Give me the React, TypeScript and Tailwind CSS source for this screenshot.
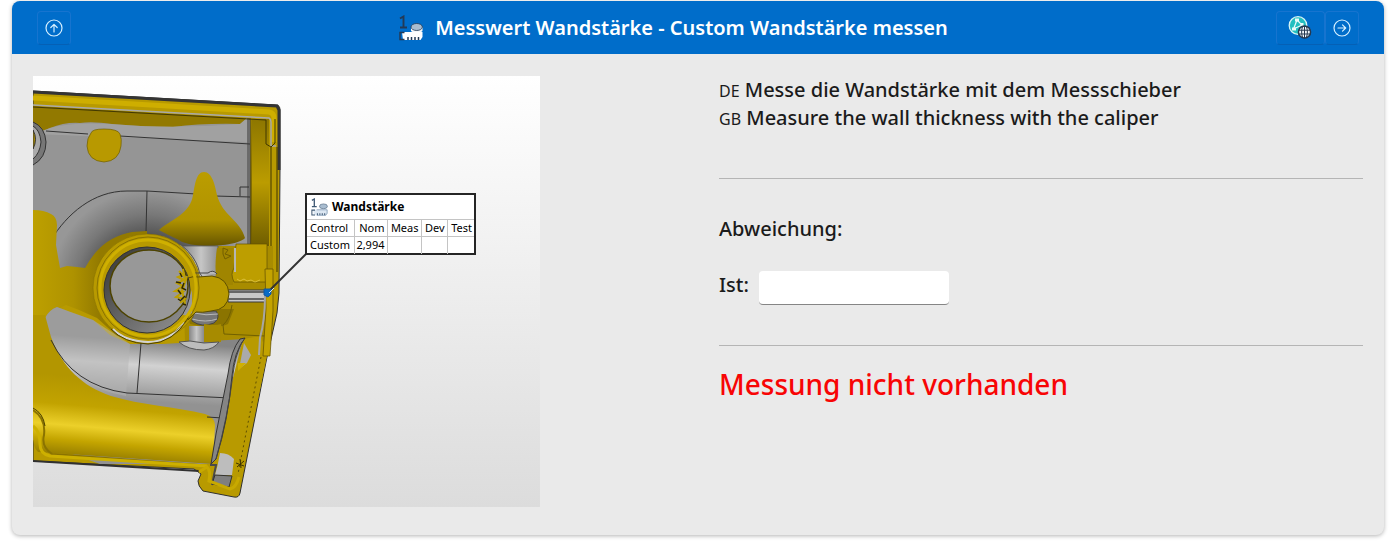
import { ReactNode, useState } from "react";

interface HeaderButtonProps {
  label: string;
  wide?: boolean;
  children: ReactNode;
}

const measurement = {
  title: "Messwert Wandstärke - Custom Wandstärke messen",
  columns: ["Control", "Nom", "Meas", "Dev", "Test"],
  values: ["Custom", "2,994", "", "", ""],
};

const instructions = [
  { lang: "DE", text: "Messe die Wandstärke mit dem Messschieber" },
  { lang: "GB", text: "Measure the wall thickness with the caliper" },
];

function HeaderButton({ label, wide, children }: HeaderButtonProps) {
  return (
    <button
      aria-label={label}
      className={`flex h-[34px] items-center justify-center rounded border border-[#1774cf] border-b-[#0560b5] ${
        wide ? "w-[49px]" : "w-[34px]"
      }`}
    >
      {children}
    </button>
  );
}

function ArrowCircle({ right }: { right?: boolean }) {
  return (
    <svg
      viewBox="0 0 20 20"
      className={right ? "size-5 rotate-90" : "size-5"}
      fill="none"
      stroke="#d6f0ff"
      strokeWidth="1.2"
      strokeLinecap="round"
      strokeLinejoin="round"
    >
      <circle cx="10" cy="10" r="8" />
      <path d="M10 14V6.5M6.8 9.5 10 6.3l3.2 3.2" />
    </svg>
  );
}

function GlobeIcon() {
  return (
    <svg viewBox="0 0 24 24" className="size-6" fill="none">
      <circle cx="10" cy="9.5" r="8.800" fill="#22bfc0" stroke="#d8f5f4" strokeWidth="1.3" />
      <path d="M9 4 5.500 13M9 4l5 5M5.500 13 14 9" stroke="#e9fbfa" strokeWidth="1.2" />
      <path d="M7 2.500h4v3H7zM4 11.500h4v3H4zM12.500 7h3v3h-3z" fill="#e9fbfa" />
      <circle cx="16.500" cy="16" r="6.800" fill="#26384f" />
      <circle cx="16.500" cy="16" r="5.300" fill="#f3f7fb" />
      <path
        d="M10.500 14.200h12M10.500 18h12M16.500 10v12.200M14.600 10.500c-1.300 3.500-1.300 7.500 0 11M18.400 10.500c1.300 3.500 1.300 7.500 0 11"
        stroke="#26384f"
        strokeWidth="1"
      />
    </svg>
  );
}

function CaliperIcon({ light, className }: { light?: boolean; className: string }) {
  const ink = light ? "#3f5873" : "#233a56";
  return (
    <svg viewBox="0 0 24 26" className={className} fill="none">
      <path d="M1 3.500 4.500 1.500v11M1 12.500h7" stroke={ink} strokeWidth="1.900" />
      <path d="M12 12v3.500c0 3 11.500 3 11.500 0V12" fill="#f5f8fb" />
      <ellipse cx="17.700" cy="12" rx="5.700" ry="3.500" fill="#a9bdd0" stroke={ink} strokeWidth=".8" />
      <path d="M3 17h20.500v5l-2 3H4z" fill={light ? "#dce7f2" : "#fff"} />
      <path d="M5.500 17.500H1v7h4.500M9 25v-3M12.500 25v-3M16 25v-3M19.500 25v-3" stroke={ink} strokeWidth="1.500" />
      {light && <path d="M8 17h15v5l-2 3H8" stroke="#7390ad" />}
    </svg>
  );
}

// Section view of the scanned housing, gold = scan, grey = CAD
function PartView() {
  return (
    <svg viewBox="33 76 507 431" className="block w-full" role="img" aria-label="Wandstärke am Gehäuse">
      <defs>
        <linearGradient id="backdrop" x1="0" y1="0" x2="0" y2="1">
          <stop stopColor="#fff" />
          <stop offset="1" stopColor="#dcdcdc" />
        </linearGradient>
        <linearGradient id="goldShade" x1="0" y1="0" x2="0" y2="1">
          <stop stopColor="#9b8100" />
          <stop offset="1" stopColor="#6f5c00" />
        </linearGradient>
        <linearGradient id="cone" x1="0" y1="0" x2="0" y2="1">
          <stop stopColor="#bb9d00" />
          <stop offset=".65" stopColor="#b09300" />
          <stop offset="1" stopColor="#665500" />
        </linearGradient>
        <linearGradient id="trough" gradientUnits="userSpaceOnUse" x1="120" y1="380" x2="113" y2="462">
          <stop stopColor="#b39600" />
          <stop offset=".35" stopColor="#c2a300" />
          <stop offset=".6" stopColor="#ecd02a" />
          <stop offset=".78" stopColor="#c4a500" />
          <stop offset="1" stopColor="#8d7600" />
        </linearGradient>
        <linearGradient id="pipe" gradientUnits="userSpaceOnUse" x1="160" y1="342" x2="156" y2="402">
          <stop stopColor="#858585" />
          <stop offset=".4" stopColor="#d2d2d2" />
          <stop offset="1" stopColor="#929292" />
        </linearGradient>
        <radialGradient id="bend" gradientUnits="userSpaceOnUse" cx="148" cy="288" r="98">
          <stop offset=".55" stopColor="#565656" />
          <stop offset=".75" stopColor="#787878" />
          <stop offset="1" stopColor="#979797" />
        </radialGradient>
        <linearGradient id="column" x1="0" y1="0" x2="0" y2="1">
          <stop stopColor="#8d7600" />
          <stop offset=".5" stopColor="#bb9c00" />
          <stop offset="1" stopColor="#6f5d00" />
        </linearGradient>
        <linearGradient id="bore" x1="0" y1="0" x2="1" y2="1">
          <stop stopColor="#333" />
          <stop offset="1" stopColor="#969696" />
        </linearGradient>
        <linearGradient id="stud">
          <stop stopColor="#858585" />
          <stop offset=".5" stopColor="#c6c6c6" />
          <stop offset="1" stopColor="#8a8a8a" />
        </linearGradient>
        <linearGradient id="wall" gradientUnits="userSpaceOnUse" x1="33" y1="0" x2="100" y2="0">
          <stop stopColor="#bda000" />
          <stop offset=".6" stopColor="#ae9200" />
          <stop offset="1" stopColor="#937a00" />
        </linearGradient>
      </defs>
      <rect x="33" y="76" width="507" height="431" fill="url(#backdrop)" />

      {/* outer body */}
      <path
        d="M33 91 276 105q4 0 4 5v60l-1 123-2 20-10 44-27 136q-1 5-6 4l-31-6q-5-5-5-10l3-7-7-5L33 461z"
        fill="#b89a00"
        stroke="#303030"
        strokeWidth="1"
      />
      <path d="m33 92 244 14 2 4v60" fill="none" stroke="#343434" strokeWidth="3" />
      <path d="m33 98 236 14q5 1 5 6v24" fill="none" stroke="#ceae00" strokeWidth="5" />

      {/* upper floor */}
      <path d="m33 106 214 13h21v125h-21V131L33 120z" fill="url(#goldShade)" />
      <path d="M33 106v28l214-10v-6z" fill="#927900" />
      <path d="M33 132q9 0 17-4 15-6 30-5 12-2 32 1 35 3 61 3 30-4 67-3l7-6 3 2v128H33z" fill="#959595" />
      <path d="M50 128q20-6 60-4 60 5 130 0l7-6v24L33 134z" fill="#aaa" opacity=".6" />
      <path d="M52 240c16-26 42-49 80-49l117 6v50l-50 40H90l-31-18z" fill="url(#bend)" />
      <path d="M252 119h17v127h-17z" fill="url(#column)" />
      <path d="M248 118v126M250 118v126" stroke="#414141" />
      <path d="m33 105 236 13q2 1 2 4v24h5" fill="none" stroke="#a9a9a9" strokeWidth="1.500" />
      <path d="m33 107 233 13v24l5 3 4-4v-24" fill="none" stroke="#413800" />
      <path d="M271 147v125M277 147v125" stroke="#403700" />
      <path
        d="m46 131 42 3M120 136l130 8M51 240c16-26 42-49 76-49h20l66 4M215 196l35 1M147 191l-1 41M249 187h-9v9"
        fill="none"
        stroke="#333"
      />

      {/* boss at the left edge */}
      <path d="M33 122q12 5 13 20 0 16-13 23" fill="#777" stroke="#333" />
      <path d="M33 126q7 4 8 16-1 11-8 17" fill="#aaa" stroke="#333" />
      <path d="M33 130q5 9 0 19z" fill="#a88b00" stroke="#333" />

      <path
        d="M91 133q1-4 13-4 14 0 16 5 2 5 1 12-2 15-17 16-16-1-17-16 0-8 4-13z"
        fill="#b89900"
        stroke="#6f5d00"
        strokeWidth=".7"
      />
      <path
        d="M204 172c8 0 11 13 13 23 5 20 23 25 28 43-8 9-55 11-66 2q-13-6-20-10c14-12 31-16 34-35 2-10 3-23 11-23z"
        fill="url(#cone)"
      />

      {/* gold wall on the left */}
      <path
        d="M33 210q11 0 18 4 6 3 6 11l-1 20 4 23 7-2 10 1 8 1q5-9 11-16 14-16 36-20l15-1v110l-30-5-20-18-18-8-13-5q-8 3-12 11H33z"
        fill="url(#wall)"
      />

      {/* area right of the ring */}
      <path d="M182 246h91v78l-10 18h-78z" fill="#a88c00" />
      <path d="M182 246h36q-2 14 2 30l-22 2-8-8z" fill="url(#stud)" stroke="#555" strokeWidth=".7" />
      <path d="M217 248h16v37h-16q-3-18 0-37z" fill="#a08500" />
      <path d="M236 244h31v38h-33q-4-8 0-14z" fill="#bd9e00" stroke="#625200" strokeWidth=".7" />
      <path d="M235 248v24" stroke="#b5b5b5" strokeWidth="2" />
      <path d="m223 248 5 2-3 4 6 2-6 3-2-5z" fill="none" stroke="#735f00" />
      <path d="m237 279 3 2 4-2 3 2 4-1 4 2 5-2" fill="none" stroke="#dcc03a" />

      {/* lower pipe */}
      <path
        d="M33 320l12-2q4-8 12-11l13 5 23 8 17 15 20 9h33l81-5q8 8 5 19l-12 10-12 96H100L33 440z"
        fill="url(#pipe)"
      />
      <path d="M45 318q4-8 12-11l36 13 37 24-4 52q-50-8-76-54z" fill="#b4b4b4" opacity=".5" />
      <path
        d="M33 315h12l6 22c12 31 31 49 60 59 30 9 65 11 94 18q10 3 10 11l-2 39-175-12q-5-4-5-18z"
        fill="url(#trough)"
      />
      <path d="M51 340q22 46 76 53l103 5M141 343l-4 50M207 417l16 1" fill="none" stroke="#333" />
      <path d="M33 410q13 8 11 25-3 12 8 19l148 11" fill="none" stroke="#8a7300" strokeWidth="2" />
      <path d="M33 408q10 5 12 18" fill="none" stroke="#4a3f00" />
      <path d="M33 426q7 5 7 18 0 10 10 12l157 10" fill="none" stroke="#cdb000" strokeWidth="3" />
      <path d="m33 461 166 10" stroke="#303030" strokeWidth="2" />

      {/* right rib */}
      <path d="m243 339 18-3 6 20-29 138-29-8 3-20 14-61z" fill="#b89a00" />
      <path d="M245 338q-11 14-13 38-4 45-16 83l-5 5 5-30 12-60q3-24 12-35z" fill="#858585" stroke="#353535" />
      <path d="M242 342q-7 14-9 32-5 42-17 85" fill="none" stroke="#444" />
      <path d="M210 465h6l-4 20" fill="none" stroke="#4a4a4a" strokeWidth="2" />
      <path d="M220 453q9 0 14 6l-2 16h-17q3-10 5-22z" fill="#bdbdbd" />
      <path d="m215 475 17 1-3 11-17-3z" fill="#7f7f7f" stroke="#333" />
      <path d="m244 343 7 12-4 8-8 6z" fill="#aaa" />
      <path d="m246 363-8 8v-8z" fill="#d0b000" />
      <path d="m261 357-23 117" fill="none" stroke="#5e4e00" strokeDasharray="2 3" />
      <path d="m240 459 1 9M236 463l8 3M244 461l-7 6" stroke="#3c3200" fill="none" />
      <path d="m199 472 8-5q4 4 2 14l21 8q6-1 9-12" fill="none" stroke="#c8a900" strokeWidth="3" />

      {/* small connector next to the ring */}
      <path d="M186 309h48l-6 15q-12 6-38 0z" fill="#8b7400" />
      <path d="M194 311h22q5 6-2 12-12 5-22-2z" fill="#777" stroke="#444" />
      <path d="M194 313q12 3 24 1M192 319q14 4 25 0" fill="none" stroke="#b9b9b9" />
      <path d="M189 326h15v16h-15z" fill="url(#stud)" />
      <path d="M204 324q11 2 17 0v18h-17z" fill="#a78b00" />
      <path d="M232 305q-2 14-9 20l1 9 41 2" fill="none" stroke="#716000" />
      <path d="M179 342q9 8 25 8 10-1 15-8l-15 1-14-2z" fill="#bcbcbc" stroke="#555" />
      <path d="M228 290h38v12h-38z" fill="#c7c7c7" stroke="#393939" />
      <path d="M228 292h36M228 299h36" stroke="#666" strokeWidth="2" />

      {/* ring */}
      <path d="M180 246q15 12 18 27l5 8" fill="none" stroke="#555" strokeWidth="4" />
      <path d="M180 246q15 12 18 27l5 8" fill="none" stroke="#d8d8d8" strokeWidth="2" />
      <circle cx="147" cy="288" r="54" fill="#b89a00" stroke="#857000" strokeWidth=".6" />
      <path d="M194 273h14q5-4 9 1" fill="#bbb" stroke="#444" />
      <path d="M188 278q5-2 10-1l14-1q16 2 17 18-1 16-18 17-9 2-15 1l-8 8z" fill="#b89a00" stroke="#5e4f00" />
      <path d="M192 290v23q-4 3-9 2z" fill="#999" />
      <path d="M184 322q-14 20-36 20-24-1-35-13" fill="none" stroke="#d2d2d2" strokeWidth="2" />
      <path d="M188 318q-14 25-40 26-24-1-37-15" fill="none" stroke="#4b4000" />
      <circle cx="148" cy="288" r="48" fill="none" stroke="#cfb000" strokeWidth="3" />
      <circle cx="148" cy="288" r="51" fill="none" stroke="#766300" strokeWidth=".7" />
      <circle cx="147" cy="290" r="43" fill="url(#bore)" stroke="#333" />
      <ellipse cx="149" cy="286" rx="39" ry="36" fill="#989898" stroke="#4d4300" strokeWidth="1.500" />
      <path
        d="m179 271 4 4-5 2 6 3-7 3 6 3-8 5 8 1-7 5 9 2-5 4M183 269l2 12-3 9 3 14M187 276l-5 16 3 10"
        fill="none"
        stroke="#bd9f00"
        strokeWidth="2"
      />
      <path
        d="m180 273 2 4M176 282l5 1M184 283l-2 5 4 2M178 290l3 4M185 296l-4 4M178 299l3 2M183 304l3 1"
        fill="none"
        stroke="#2f2800"
        strokeWidth="1.500"
      />

      {/* wall under measurement */}
      <path d="M265 269h8v42l-3 45h-7l3-48z" fill="#c3a300" stroke="#5e4e00" strokeWidth=".7" />
      <path d="M265 296q0 24-5 42l-1 17" fill="none" stroke="#a6a6a6" strokeWidth="2" />
      <path d="m267 293 39-39" stroke="#333" strokeWidth="2" />
      <path d="M264 289h7v5l-3 3-4-2z" fill="#086bc5" stroke="#18579a" />
      <path d="m269 293 5-5" stroke="#c9e4ff" strokeWidth="1" />
    </svg>
  );
}

function MeasureLabel() {
  return (
    <div className="absolute left-[272px] top-[117px] h-[62px] w-[171px] border-2 border-[#252525] bg-white text-black">
      <div className="flex h-6 items-center gap-1 pl-1">
        <CaliperIcon light className="h-[18px] w-[17px]" />
        <span className="text-xs font-bold leading-5">Wandstärke</span>
      </div>
      <table className="w-full table-fixed border-collapse text-[11px] leading-4">
        <colgroup>
          <col className="w-[47px]" />
          <col className="w-[33px]" />
          <col className="w-[34px]" />
          <col className="w-[26px]" />
          <col />
        </colgroup>
        <thead>
          <tr className="h-[17px]">
            {measurement.columns.map((name, i) => (
              <th
                key={name}
                className={`border-t border-[#c4c4c4] p-0 font-normal ${
                  i === 0 ? "pl-[3px] text-left" : "border-l pr-0.5 text-right"
                }`}
              >
                {name}
              </th>
            ))}
          </tr>
        </thead>
        <tbody>
          <tr className="h-[17px]">
            {measurement.values.map((value, i) => (
              <td
                key={i}
                className={`border-t border-[#c4c4c4] p-0 ${
                  i === 0 ? "pl-[3px] text-left" : "border-l pr-0.5 text-right"
                }`}
              >
                {value}
              </td>
            ))}
          </tr>
        </tbody>
      </table>
    </div>
  );
}

export default function App() {
  const [actual, setActual] = useState("");

  return (
    <div className="bg-white pb-2.5 pl-3 pr-2.5 pt-px font-['Noto_Sans','Open_Sans',sans-serif] text-[#1b1b1b]">
      <main className="overflow-hidden rounded-lg bg-[#eaeaea] shadow-[0_1px_4px_rgba(0,0,0,0.3)]">
        <header className="flex h-[53px] items-center justify-between bg-[#006dca] px-[25px]">
          <HeaderButton label="Nach oben">
            <ArrowCircle />
          </HeaderButton>
          <div className="flex items-center gap-3">
            <CaliperIcon className="h-[26px] w-6" />
            <h1 className="text-xl font-semibold text-white">{measurement.title}</h1>
          </div>
          <div className="flex">
            <HeaderButton label="Sprache" wide>
              <GlobeIcon />
            </HeaderButton>
            <HeaderButton label="Weiter">
              <ArrowCircle right />
            </HeaderButton>
          </div>
        </header>

        <div className="grid grid-cols-2 gap-[42px] px-[21px] pb-7 pt-[22px]">
          <figure className="relative w-[507px] max-w-full">
            <PartView />
            <MeasureLabel />
          </figure>

          <section className="text-xl font-medium leading-7">
            {instructions.map(({ lang, text }) => (
              <p key={lang}>
                <span className="text-base font-normal">{lang}</span> {text}
              </p>
            ))}
            <hr className="mb-9 mt-[46px] border-[#b5b5b5]" />
            <p>Abweichung:</p>
            <div className="mt-7 flex items-start gap-2.5">
              <label htmlFor="actual">Ist:</label>
              <input
                id="actual"
                value={actual}
                onChange={(e) => setActual(e.target.value)}
                className="h-[34px] w-[190px] rounded border-b border-[#858585] bg-white px-3 text-base outline-none"
              />
            </div>
            <hr className="mb-5 mt-10 border-[#b5b5b5]" />
            <p className="text-[28px] leading-9 text-[#f80505]">Messung nicht vorhanden</p>
          </section>
        </div>
      </main>
    </div>
  );
}
